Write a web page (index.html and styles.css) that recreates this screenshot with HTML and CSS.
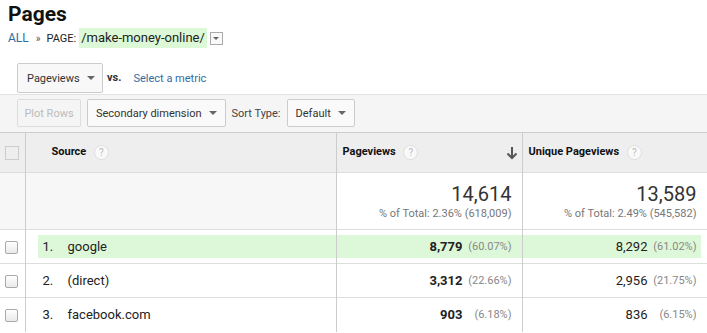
FILE: index.html
```html
<!DOCTYPE html>
<html lang="en">
<head>
  <meta charset="UTF-8">
  <title>Pages</title>
  <link rel="stylesheet" href="styles.css">
</head>
<body>

<div class="head">
  <h1>Pages</h1>
  <div class="crumbs">
    <a class="link all">ALL</a>
    <span class="raquo">&raquo;</span>
    <span class="page-label">PAGE:</span>
    <span class="page-val">/make-money-online/</span>
    <span class="mini-drop"><span class="tri"></span></span>
  </div>
</div>

<div class="metric-bar">
  <div class="select wide">Pageviews <span class="tri"></span></div>
  <span class="vs">vs.</span>
  <a class="link metric">Select a metric</a>
</div>

<div class="toolbar">
  <div class="btn disabled">Plot Rows</div>
  <div class="select">Secondary dimension <span class="tri"></span></div>
  <span class="sort-label">Sort Type:</span>
  <div class="select">Default <span class="tri"></span></div>
</div>

<table class="report">
  <colgroup>
    <col class="c-chk">
    <col class="c-src">
    <col class="c-pv">
    <col class="c-upv">
  </colgroup>
  <tr class="hdr">
    <th class="chk"><span class="box"></span></th>
    <th class="src">Source <span class="help">?</span></th>
    <th class="met">Pageviews <span class="help">?</span>
      <svg class="arrow" width="12" height="14" viewBox="0 0 12 14"><path d="M6 1v11M1.5 7.5L6 12l4.5-4.5" fill="none" stroke="#555" stroke-width="2"/></svg>
    </th>
    <th class="met">Unique Pageviews <span class="help">?</span></th>
  </tr>
  <tr class="totals">
    <td class="chk"></td>
    <td class="src"></td>
    <td class="met"><div class="big">14,614</div><div class="pct-total">% of Total: 2.36% (618,009)</div></td>
    <td class="met"><div class="big">13,589</div><div class="pct-total">% of Total: 2.49% (545,582)</div></td>
  </tr>
  <tr class="row hl">
    <td class="chk"><span class="cb"></span></td>
    <td class="src"><div class="cell"><span class="num">1.</span>google</div></td>
    <td class="met"><div class="cell"><b>8,779</b><span class="pct">(60.07%)</span></div></td>
    <td class="met last"><div class="cell">8,292<span class="pct">(61.02%)</span></div></td>
  </tr>
  <tr class="row">
    <td class="chk"><span class="cb"></span></td>
    <td class="src"><div class="cell"><span class="num">2.</span>(direct)</div></td>
    <td class="met"><div class="cell"><b>3,312</b><span class="pct">(22.66%)</span></div></td>
    <td class="met last"><div class="cell">2,956<span class="pct">(21.75%)</span></div></td>
  </tr>
  <tr class="row">
    <td class="chk"><span class="cb"></span></td>
    <td class="src"><div class="cell"><span class="num">3.</span>facebook.com</div></td>
    <td class="met"><div class="cell"><b>903</b><span class="pct">(6.18%)</span></div></td>
    <td class="met last"><div class="cell">836<span class="pct">(6.15%)</span></div></td>
  </tr>
</table>

</body>
</html>
```

FILE: styles.css
```css
body {
  margin: 0;
  font-family: Roboto, Arial, sans-serif;
  color: #222;
  background: #fff;
  width: 707px;
  overflow: hidden;
}
.head {
  padding: 2px 8px 0;
}
h1 {
  margin: 0;
  font-size: 21px;
  font-weight: bold;
  line-height: 24px;
  color: #111;
}
.crumbs {
  display: flex;
  align-items: center;
  margin-top: 2px;
  height: 20px;
}
.link {
  color: #2e6da4;
  cursor: pointer;
}
.all {
  font-size: 12px;
}
.raquo {
  font-size: 10px;
  color: #555;
  margin: 0 6px 0 7px;
}
.page-label {
  font-size: 11px;
  color: #222;
  margin-right: 3px;
}
.page-val {
  background: #dcf8d6;
  font-size: 13px;
  line-height: 20px;
  padding: 0 2px;
  color: #222;
}
.mini-drop {
  display: inline-flex;
  align-items: center;
  justify-content: center;
  width: 11px;
  height: 11px;
  border: 1px solid #aaa;
  margin-left: 3px;
  background: #fafafa;
}
.tri {
  display: inline-block;
  width: 0;
  height: 0;
  border-left: 4px solid transparent;
  border-right: 4px solid transparent;
  border-top: 4px solid #666;
}
.mini-drop .tri {
  border-left-width: 3px;
  border-right-width: 3px;
  border-top-width: 3px;
}

.metric-bar {
  display: flex;
  align-items: center;
  padding: 15px 0 0 17px;
  height: 30px;
  font-size: 11px;
}
.select {
  display: flex;
  align-items: center;
  justify-content: space-between;
  gap: 7px;
  height: 27px;
  padding: 0 8px 0 8px;
  border: 1px solid #ccc;
  border-radius: 2px;
  background: #f8f8f8;
  font-size: 11px;
  color: #333;
  box-sizing: border-box;
  white-space: nowrap;
}
.metric-bar .select {
  height: 30px;
  width: 86px;
  padding-left: 9px;
}
.vs {
  font-weight: bold;
  color: #333;
  margin: 0 12px 0 4px;
  position: relative;
  top: -1px;
}
.metric {
  font-size: 11px;
}

.toolbar {
  display: flex;
  align-items: center;
  gap: 6px;
  margin-top: 1px;
  padding: 4px 0 5px 17px;
  height: 28px;
  background: #f5f5f5;
  border-top: 1px solid #e2e2e2;
}
.btn {
  height: 28px;
  display: flex;
  align-items: center;
  justify-content: center;
  border: 1px solid #ddd;
  border-radius: 2px;
  font-size: 11px;
  box-sizing: border-box;
  white-space: nowrap;
}
.btn.disabled {
  color: #bbb;
  background: #f5f5f5;
  width: 64px;
}
.toolbar .select {
  height: 28px;
  background: #fafafa;
}
.sort-label {
  font-size: 11px;
  color: #444;
}

.report {
  width: 707px;
  table-layout: fixed;
  border-collapse: collapse;
  font-size: 13px;
}
.c-chk { width: 25px; }
.c-src { width: 311px; }
.c-pv { width: 186px; }
.c-upv { width: 185px; }
.report th,
.report td {
  padding: 0;
  border-left: 1px solid #ccc;
}
.report th:first-child,
.report td:first-child {
  border-left: none;
}
.report tr > :last-child {
  border-right: 1px solid #ddd;
}
.hdr {
  height: 40px;
  background: #eee;
  border-top: 1px solid #ccc;
  border-bottom: 1px solid #ddd;
}
.hdr th {
  text-align: left;
  font-size: 11px;
  font-weight: bold;
  color: #111;
}
.report .chk {
  text-align: center;
}
.box {
  display: inline-block;
  width: 12px;
  height: 12px;
  border: 1px solid #ccc;
  vertical-align: middle;
}
.hdr .src {
  padding-left: 26px;
}
.hdr .met {
  padding-left: 6px;
  position: relative;
}
.help {
  display: inline-flex;
  align-items: center;
  justify-content: center;
  width: 13px;
  height: 13px;
  border: 1px solid #ddd;
  border-radius: 50%;
  background: #f9f9f9;
  color: #bbb;
  font-size: 10px;
  font-weight: normal;
  margin-left: 5px;
  vertical-align: middle;
}
.arrow {
  position: absolute;
  right: 4px;
  top: 13px;
}

.totals {
  height: 57px;
  border-bottom: 1px solid #ddd;
}
.totals .chk,
.totals .src {
  background: #f7f7f7;
}
.totals .met {
  text-align: right;
  padding-right: 10px;
  vertical-align: top;
  padding-top: 9px;
}
.big {
  font-size: 20px;
  color: #333;
  line-height: 24px;
}
.pct-total {
  font-size: 11px;
  color: #777;
  margin-top: 1px;
}

.row {
  height: 34px;
  border-bottom: 1px solid #ddd;
}
.row:last-child {
  border-bottom: none;
}
.cb {
  display: inline-block;
  width: 11px;
  height: 11px;
  border: 1px solid #aaa;
  border-radius: 2px;
  background: linear-gradient(#fff, #e9e9e9);
  vertical-align: middle;
  margin-left: -2px;
}
.cell {
  height: 23px;
  display: flex;
  align-items: center;
}
.src .cell {
  margin-left: 12px;
  padding-left: 5px;
}
.num {
  width: 25px;
}
.met .cell {
  justify-content: flex-end;
  padding-right: 10px;
}
.met.last .cell {
  margin-right: 6px;
  padding-right: 4px;
}
.row b {
  font-weight: bold;
}
.pct {
  width: 49px;
  text-align: right;
  font-size: 11px;
  color: #888;
}
.hl .cell {
  background: #ddf8d9;
}
```
